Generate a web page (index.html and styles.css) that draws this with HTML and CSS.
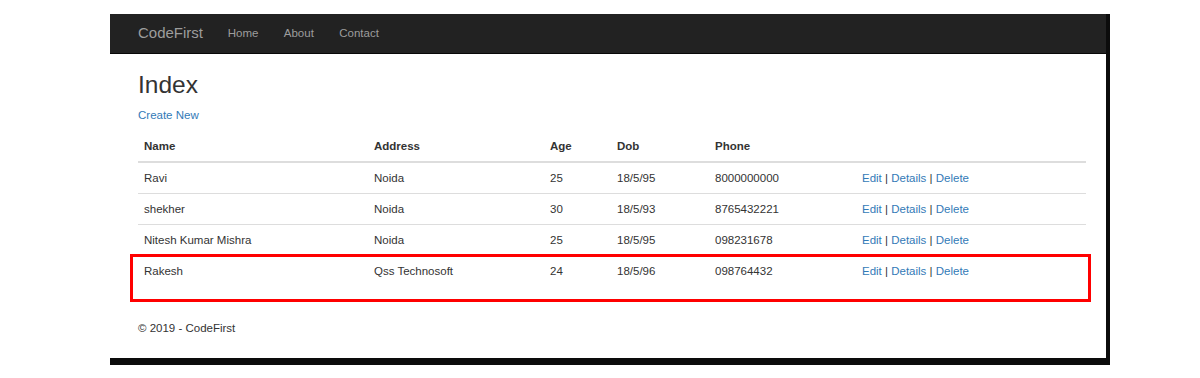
FILE: index.html
```html
<!DOCTYPE html>
<html lang="en">
<link rel="stylesheet" href="styles.css">

<head>
    <meta charset="UTF-8" />
    <meta name="viewport" content="width=device-width, initial-scale=1.0" />
    <title>Index - CodeFirst</title>
</head>

<body>
    <div class="page">
        <header class="navbar">
            <a class="brand" href="#">CodeFirst</a>
            <a class="nav-link" href="#">Home</a>
            <a class="nav-link" href="#">About</a>
            <a class="nav-link" href="#">Contact</a>
        </header>

        <div class="body-content">
            <h2 class="title">Index</h2>
            <p class="create"><a href="#">Create New</a></p>

            <table class="table">
                <tr>
                    <th class="col-name">Name</th>
                    <th class="col-address">Address</th>
                    <th class="col-age">Age</th>
                    <th class="col-dob">Dob</th>
                    <th class="col-phone">Phone</th>
                    <th></th>
                </tr>
                <tr>
                    <td>Ravi</td>
                    <td>Noida</td>
                    <td>25</td>
                    <td>18/5/95</td>
                    <td>8000000000</td>
                    <td><a href="#">Edit</a> | <a href="#">Details</a> | <a href="#">Delete</a></td>
                </tr>
                <tr>
                    <td>shekher</td>
                    <td>Noida</td>
                    <td>30</td>
                    <td>18/5/93</td>
                    <td>8765432221</td>
                    <td><a href="#">Edit</a> | <a href="#">Details</a> | <a href="#">Delete</a></td>
                </tr>
                <tr>
                    <td>Nitesh Kumar Mishra</td>
                    <td>Noida</td>
                    <td>25</td>
                    <td>18/5/95</td>
                    <td>098231678</td>
                    <td><a href="#">Edit</a> | <a href="#">Details</a> | <a href="#">Delete</a></td>
                </tr>
                <tr>
                    <td>Rakesh</td>
                    <td>Qss Technosoft</td>
                    <td>24</td>
                    <td>18/5/96</td>
                    <td>098764432</td>
                    <td><a href="#">Edit</a> | <a href="#">Details</a> | <a href="#">Delete</a></td>
                </tr>
            </table>

            <footer class="footer">&copy; 2019 - CodeFirst</footer>
        </div>

        <!-- highlight around the new row -->
        <div class="highlight"></div>
    </div>
</body>

</html>
```

FILE: styles.css
```css
* {
    margin: 0;
    padding: 0;
    box-sizing: border-box;
}

body {
    padding: 14px 0 0 110px;
    background-color: white;
    font-family: "Liberation Sans", Arial, sans-serif;
    font-size: 11.5px;
    line-height: 16px;
    color: #333;
}

a {
    color: #337ab7;
    text-decoration: none;
}

.page {
    position: relative;
    width: 1000px;
    height: 351px;
    border-right: 4px solid #0c0c0c;
    border-bottom: 7px solid #0c0c0c;
}

.navbar {
    display: flex;
    align-items: center;
    height: 40px;
    padding: 0 0 2px 28px;
    background-color: #222;
    border-bottom: 1px solid #080808;
}

.brand {
    color: #9d9d9d;
    font-size: 15px;
    margin-right: 12px;
}

.nav-link {
    color: #9d9d9d;
    padding: 0 12.7px;
}

.body-content {
    padding: 0 28px;
}

.title {
    margin: 17px 0 9px;
    font-size: 24.5px;
    font-weight: 500;
    line-height: 27px;
    color: #333;
}

.create {
    margin-bottom: 8px;
}

.table {
    width: 948px;
    border-collapse: separate;
    border-spacing: 0;
    table-layout: fixed;
}

.table th,
.table td {
    padding: 7px 6px;
    text-align: left;
    vertical-align: top;
    line-height: 16px;
}

.table th {
    font-weight: bold;
    border-bottom: 2px solid #ddd;
}

.table td {
    border-top: 1px solid #ddd;
}

.table tr:nth-child(2) td {
    border-top: none;
}

.col-name {
    width: 230px;
}

.col-address {
    width: 176px;
}

.col-age {
    width: 67px;
}

.col-dob {
    width: 98px;
}

.col-phone {
    width: 147px;
}

.footer {
    margin-top: 34px;
}

.highlight {
    position: absolute;
    left: 20px;
    top: 240px;
    width: 961px;
    height: 48px;
    border: 3px solid #f00;
}
```
